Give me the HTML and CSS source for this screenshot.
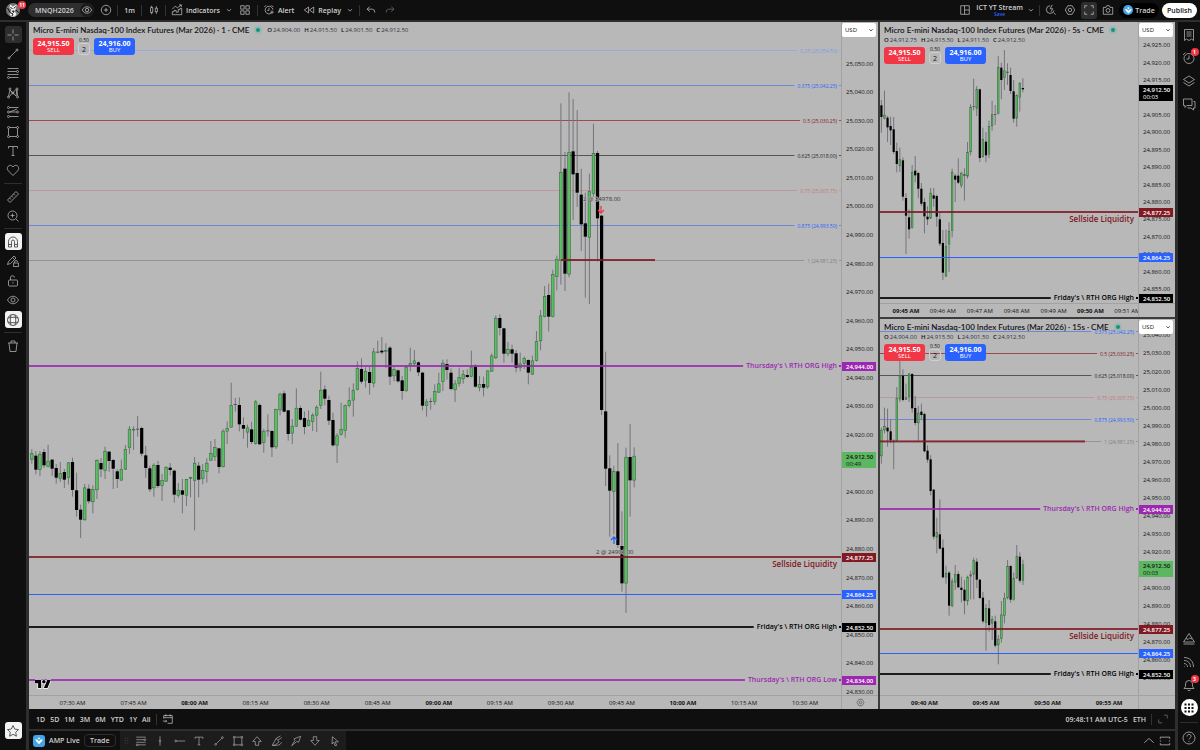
FILE: index.html
```html
<!DOCTYPE html>
<html lang="en">
<head>
  <meta charset="UTF-8" />
  <meta name="viewport" content="width=device-width, initial-scale=1" />
  <title>MNQH2026 24,912.50</title>
  <link rel="stylesheet" href="styles.css">
</head>
<body>
  <svg class="sprite" aria-hidden="true">
    <symbol id="i-cross" viewBox="0 0 28 28"><path d="M14 3v8M14 17v8M3 14h8M17 14h8M14 14h.1"/></symbol>
    <symbol id="i-line" viewBox="0 0 28 28"><path d="M7.500 20.500l13-13"/><circle cx="6" cy="22" r="2"/><circle cx="22" cy="6" r="2"/></symbol>
    <symbol id="i-fib" viewBox="0 0 28 28"><path d="M3 5h22M3 11h18M3 17h22M7 23h18"/><circle cx="23" cy="11" r="2"/><circle cx="5" cy="23" r="2"/></symbol>
    <symbol id="i-pattern" viewBox="0 0 28 28"><path d="M5 21L8 8l12 12L22 8M7 21l6-7 8-8M22 8l1 12M8 8l5 6"/><circle cx="5" cy="22" r="2"/><circle cx="8" cy="6" r="2"/><circle cx="14" cy="14" r="2"/><circle cx="22" cy="6" r="2"/><circle cx="23" cy="22" r="2"/></symbol>
    <symbol id="i-position" viewBox="0 0 28 28"><path d="M7 5h18M7 14h14M7 23h18M8 14l14-6"/><circle cx="5" cy="5" r="2"/><circle cx="5" cy="14" r="2"/><circle cx="5" cy="23" r="2"/><circle cx="23" cy="14" r="2"/></symbol>
    <symbol id="i-rect" viewBox="0 0 28 28"><path d="M7 5h14M7 23h14M5 7v14M23 7v14"/><circle cx="5" cy="5" r="2"/><circle cx="23" cy="5" r="2"/><circle cx="5" cy="23" r="2"/><circle cx="23" cy="23" r="2"/></symbol>
    <symbol id="i-text" viewBox="0 0 28 28"><path d="M5 9V5h18v4M14 5v18M11 23h6"/></symbol>
    <symbol id="i-heart" viewBox="0 0 28 28"><path d="M14 25L5 16c-7-8 4-16 9-8 5-8 16 0 9 8z"/></symbol>
    <symbol id="i-ruler" viewBox="0 0 28 28"><path d="M3 20L20 3l5 5L8 25zM7 16l3 3M11 12l3 3M15 8l3 3"/></symbol>
    <symbol id="i-zoom" viewBox="0 0 28 28"><circle cx="13" cy="13" r="9"/><path d="M20 20l5 5M13 9v8M9 13h8"/></symbol>
    <symbol id="i-magnet" viewBox="0 0 28 28"><path d="M5 24V13a9 9 0 0 1 18 0v11h-6V13a3 3 0 0 0-6 0v11zM5 19h6M17 19h6"/></symbol>
    <symbol id="i-pencil-lock" viewBox="0 0 28 28"><path d="M3 21l2-6L16 4l4 4L9 19zM15 18h10v7H15zM17 18v-2a3 3 0 0 1 6 0M13 7l4 4"/></symbol>
    <symbol id="i-lock" viewBox="0 0 28 28"><rect x="5" y="12" width="18" height="12" rx="2"/><path d="M9 12V8a4 4 0 0 1 8-1M14 16v3"/></symbol>
    <symbol id="i-eye" viewBox="0 0 28 28"><path d="M3 14c5-10 17-10 22 0-5 10-17 10-22 0z"/><circle cx="14" cy="14" r="4"/></symbol>
    <symbol id="i-globe" viewBox="0 0 28 28"><circle cx="14" cy="14" r="11"/><path d="M10 4c-2 6-2 14 0 20M18 4c2 6 2 14 0 20M4 10c6-2 14-2 20 0M4 18c6 2 14 2 20 0"/></symbol>
    <symbol id="i-trash" viewBox="0 0 28 28"><path d="M4 8h20M10 8V4h8v4M6 8l2 17h12l2-17"/></symbol>
    <symbol id="i-star" viewBox="0 0 28 28"><path d="M14 3l3.400 7.200 7.600 1-5.600 5.400 1.400 7.800L14 20.600 7.200 24.400l1.400-7.800L3 11.200l7.600-1z"/></symbol>
    <symbol id="i-plus" viewBox="0 0 28 28"><circle cx="14" cy="14" r="11"/><path d="M14 9v10M9 14h10"/></symbol>
    <symbol id="i-bars" viewBox="0 0 28 28"><path d="M6 8h5v12H6zM8.500 4v4M8.500 20v4M17 10h5v8h-5zM19.500 5v5M19.500 18v5"/></symbol>
    <symbol id="i-indicators" viewBox="0 0 28 28"><path d="M3 12l7-7 5 4 9-7M19 2h5v5M3 25v-7h4v-3h5v4h5v-6h4v-3h4v15z"/></symbol>
    <symbol id="i-grid" viewBox="0 0 28 28"><path d="M4 4h8v8H4zM16 4h8v8h-8zM4 16h8v8H4zM16 16h8v8h-8z"/></symbol>
    <symbol id="i-alert" viewBox="0 0 28 28"><path d="M20 21a9 9 0 1 1 3-8M14 9v6h-4M3 7l4-4M20 3l4 4M21 15v8M17 19h8"/></symbol>
    <symbol id="i-replay" viewBox="0 0 28 28"><path d="M13 7v14l-10-7zM25 7v14l-10-7z"/></symbol>
    <symbol id="i-undo" viewBox="0 0 28 28"><path d="M11 6l-6 6 6 6M5 12h12q6 0 6 8"/></symbol>
    <symbol id="i-redo" viewBox="0 0 28 28"><path d="M17 6l6 6-6 6M23 12H11q-6 0-6 8"/></symbol>
    <symbol id="i-down" viewBox="0 0 28 28"><path d="M7 11l7 7 7-7"/></symbol>
    <symbol id="i-up" viewBox="0 0 28 28"><path d="M3 18l11-10 11 10"/></symbol>
    <symbol id="i-layout" viewBox="0 0 28 28"><path d="M4 4h20v20H4zM13 4v20M13 14h11"/></symbol>
    <symbol id="i-flash" viewBox="0 0 28 28"><path d="M20 20l5 5M12 4a9 9 0 1 0 9 11M17 2l-5 9h6l-4 7"/></symbol>
    <symbol id="i-hex" viewBox="0 0 28 28"><path d="M9 4h10l6 10-6 10H9L3 14z"/><circle cx="14" cy="14" r="4"/></symbol>
    <symbol id="i-full" viewBox="0 0 28 28"><path d="M4 10V4h6M18 4h6v6M24 18v6h-6M10 24H4v-6"/></symbol>
    <symbol id="i-camera" viewBox="0 0 28 28"><path d="M3 8h6l2-4h6l2 4h6v16H3z"/><circle cx="14" cy="15" r="4.500"/></symbol>
    <symbol id="i-list" viewBox="0 0 28 28"><path d="M5 3h18v22l-4-3-5 3-5-3-4 3zM9 8h10M9 12h10M9 16h10"/></symbol>
    <symbol id="i-clock" viewBox="0 0 28 28"><circle cx="14" cy="15" r="10"/><path d="M14 9v7H9M2 8l5-5"/></symbol>
    <symbol id="i-layers" viewBox="0 0 28 28"><path d="M3 11l11-7 11 7-11 7zM3 17l11 7 11-7"/></symbol>
    <symbol id="i-chat" viewBox="0 0 28 28"><path d="M3 4h17v13H10l-4 4v-4H3zM23 9h3v13h-3v4l-5-4h-7"/></symbol>
    <symbol id="i-peak" viewBox="0 0 28 28"><path d="M14 3l11 17H3zM8 13l4 2 3-3 5 2M3 24h22"/></symbol>
    <symbol id="i-feed" viewBox="0 0 28 28"><path d="M4 5c12 0 19 8 19 19M4 11c8 0 13 5 13 13M4 17c4 0 7 3 7 7M4 23h1"/></symbol>
    <symbol id="i-bell" viewBox="0 0 28 28"><path d="M4 21l3-4v-5a7 7 0 0 1 14 0v5l3 4zM11 24q3 3 6 0"/></symbol>
    <symbol id="i-help" viewBox="0 0 28 28"><circle cx="14" cy="14" r="12"/><path d="M10 11c0-6 9-5 8 0 0 3-4 3-4 6M14 20v2"/></symbol>
    <symbol id="i-calendar" viewBox="0 0 28 28"><path d="M4 13V6h20v18H13M4 11h20M9 3v5M19 3v5M2 19h9M8 16l3 3-3 3"/></symbol>
    <symbol id="i-corner" viewBox="0 0 28 28"><path d="M16 5h8v8M4 15v8h8"/></symbol>
    <symbol id="i-panel" viewBox="0 0 28 28"><path d="M3 9V5h22v4M3 19v4h22v-4M2 14h3M23 14h3"/></symbol>
    <symbol id="i-vline" viewBox="0 0 28 28"><path d="M14 3v9M14 16v9"/><circle cx="14" cy="14" r="2"/></symbol>
    <symbol id="i-hray" viewBox="0 0 28 28"><path d="M6 14h20"/><circle cx="4" cy="14" r="2"/></symbol>
    <symbol id="i-arrow-up" viewBox="0 0 28 28"><path d="M14 4l10 11h-6v9h-8v-9H4z"/></symbol>
    <symbol id="i-arrow-down" viewBox="0 0 28 28"><path d="M14 24l10-11h-6V4h-8v9H4z"/></symbol>
    <symbol id="i-brush" viewBox="0 0 28 28"><path d="M3 24L12 8l7 8-10 8zM12 8l10-6M16 12l9-6M3 24h12q6 0 10-7"/></symbol>
    <symbol id="i-arrow-mark" viewBox="0 0 28 28"><path d="M25 3l-5 14-4-2L4 25l8-13-3-3z"/></symbol>
    <symbol id="i-cursor" viewBox="0 0 28 28"><path d="M8 4l14 12h-8l4 8-4 1-3-8-4 4z"/></symbol>
    <symbol id="i-drop" viewBox="0 0 28 28"><path class="solid" d="M3 9l6 1 5 5 5-5 6-1-4 7-7 7-7-7z"/><path class="solid" d="M10 6l4 4 4-4-4-2z"/></symbol>
    <symbol id="i-logo" viewBox="0 0 36 28"><path d="M14 22H7V11H0V4h14v18zM28 22h-8l7.500-18h8L28 22z"/><circle cx="20" cy="8" r="4"/></symbol>
  </svg>

  <div class="app">
    <header class="topbar">
      <button class="avatar" aria-label="Account">
        <svg class="avatar-pic" viewBox="0 0 28 28"><circle cx="14" cy="14" r="14" fill="#777"/><path d="M8 3l6 4 7-4-1 8-3 5 4 6-3 5h-8l-3-6 4-7-4-4z" fill="#eee"/><path d="M9 9l4 2M19 7l-3 4M13 16h3l-1 3zM8 19l6 3-2 4M20 14l5 5M3 10l5 9" stroke="#111" stroke-width="2" fill="none"/></svg>
        <span class="badge">11</span>
      </button>
      <button class="symbol">MNQH2026 <span class="symbol-eye"><svg class="icon"><use href="#i-eye"/></svg></span></button>
      <button class="tb" aria-label="Compare"><svg class="icon"><use href="#i-plus"/></svg></button>
      <i class="sep"></i>
      <button class="tb">1m</button>
      <i class="sep"></i>
      <button class="tb" aria-label="Bar style"><svg class="icon"><use href="#i-bars"/></svg></button>
      <i class="sep"></i>
      <button class="tb"><svg class="icon"><use href="#i-indicators"/></svg>Indicators</button>
      <button class="tb chev" aria-label="Favorite indicators"><svg class="icon"><use href="#i-down"/></svg></button>
      <button class="tb" aria-label="Templates"><svg class="icon"><use href="#i-grid"/></svg></button>
      <i class="sep"></i>
      <button class="tb roomy"><svg class="icon"><use href="#i-alert"/></svg>Alert</button>
      <button class="tb"><svg class="icon"><use href="#i-replay"/></svg>Replay</button>
      <button class="tb chev" aria-label="Replay menu"><svg class="icon"><use href="#i-down"/></svg></button>
      <i class="sep"></i>
      <button class="tb" aria-label="Undo"><svg class="icon"><use href="#i-undo"/></svg></button>
      <button class="tb dim" aria-label="Redo"><svg class="icon"><use href="#i-redo"/></svg></button>
      <div class="topbar-right">
        <button class="tb" aria-label="Layout setup"><svg class="icon"><use href="#i-layout"/></svg></button>
        <button class="layout-name">ICT YT Stream<span>Save</span></button>
        <button class="tb chev" aria-label="Manage layouts"><svg class="icon"><use href="#i-down"/></svg></button>
        <i class="sep"></i>
        <button class="tb" aria-label="Quick search"><svg class="icon"><use href="#i-flash"/></svg></button>
        <button class="tb" aria-label="Settings"><svg class="icon"><use href="#i-hex"/></svg></button>
        <button class="tb on" aria-label="Fullscreen"><svg class="icon"><use href="#i-full"/></svg></button>
        <button class="tb" aria-label="Snapshot"><svg class="icon"><use href="#i-camera"/></svg></button>
        <button class="trade-pill"><span class="broker round"><svg class="icon"><use href="#i-drop"/></svg></span>Trade</button>
        <button class="publish">Publish</button>
      </div>
    </header>

    <nav class="rail">
      <div class="tool-group tools-draw">
        <button class="tool on" aria-label="Cross"><svg class="icon"><use href="#i-cross"/></svg></button>
        <button class="tool" aria-label="Trend line"><svg class="icon"><use href="#i-line"/></svg></button>
        <button class="tool" aria-label="Fib retracement"><svg class="icon"><use href="#i-fib"/></svg></button>
        <button class="tool" aria-label="Patterns"><svg class="icon"><use href="#i-pattern"/></svg></button>
        <button class="tool" aria-label="Long position"><svg class="icon"><use href="#i-position"/></svg></button>
        <button class="tool" aria-label="Rectangle"><svg class="icon"><use href="#i-rect"/></svg></button>
        <button class="tool" aria-label="Text"><svg class="icon"><use href="#i-text"/></svg></button>
        <button class="tool" aria-label="Icons"><svg class="icon"><use href="#i-heart"/></svg></button>
      </div>
      <i class="rule"></i>
      <div class="tool-group tools-measure">
        <button class="tool" aria-label="Measure"><svg class="icon"><use href="#i-ruler"/></svg></button>
        <button class="tool" aria-label="Zoom in"><svg class="icon"><use href="#i-zoom"/></svg></button>
      </div>
      <i class="rule"></i>
      <div class="tool-group tools-mode">
        <button class="tool picked" aria-label="Magnet"><svg class="icon"><use href="#i-magnet"/></svg></button>
        <button class="tool" aria-label="Keep drawing"><svg class="icon"><use href="#i-pencil-lock"/></svg></button>
        <button class="tool" aria-label="Lock drawings"><svg class="icon"><use href="#i-lock"/></svg></button>
        <button class="tool" aria-label="Hide drawings"><svg class="icon"><use href="#i-eye"/></svg></button>
        <button class="tool picked" aria-label="Sync drawings"><svg class="icon"><use href="#i-globe"/></svg></button>
      </div>
      <i class="rule"></i>
      <button class="tool" aria-label="Remove"><svg class="icon"><use href="#i-trash"/></svg></button>
      <button class="tool picked last" aria-label="Favorites"><svg class="icon"><use href="#i-star"/></svg></button>
    </nav>

    <main class="center">
      <div class="charts">
        <section class="chart chart-main" data-chart="m1">
          <div class="plot">
            <svg class="plot-svg"></svg>
            <div class="legend">
              <div class="legend-row">
                <h2>Micro E-mini Nasdaq-100 Index Futures (Mar 2026) · 1 · CME</h2>
                <i class="live"></i>
                <p class="ohlc"><span><b>O</b>24,904.00</span> <span><b>H</b>24,915.50</span> <span><b>L</b>24,901.50</span> <span><b>C</b>24,912.50</span></p>
              </div>
              <div class="order">
                <button class="sell"><b>24,915.50</b>SELL</button>
                <div class="qty"><span>0.50</span><button>2</button></div>
                <button class="buy"><b>24,916.00</b>BUY</button>
              </div>
            </div>
            <svg class="tv-logo"><use href="#i-logo"/></svg>
          </div>
          <div class="price-axis">
            <svg class="axis-svg"></svg>
            <label class="currency"><select aria-label="Currency"><option>USD</option></select><svg class="icon"><use href="#i-down"/></svg></label>
          </div>
          <svg class="time-svg"></svg>
          <button class="axis-corner" aria-label="Scale settings"><svg class="icon"><use href="#i-hex"/></svg></button>
        </section>

        <section class="chart" data-chart="s5">
          <div class="plot">
            <svg class="plot-svg"></svg>
            <div class="legend">
              <div class="legend-row">
                <h2>Micro E-mini Nasdaq-100 Index Futures (Mar 2026) · 5s · CME</h2>
                <i class="live"></i>
              </div>
              <p class="ohlc"><span><b>O</b>24,912.75</span> <span><b>H</b>24,915.50</span> <span><b>L</b>24,911.50</span> <span><b>C</b>24,912.50</span></p>
              <div class="order">
                <button class="sell"><b>24,915.50</b>SELL</button>
                <div class="qty"><span>0.50</span><button>2</button></div>
                <button class="buy"><b>24,916.00</b>BUY</button>
              </div>
            </div>
          </div>
          <div class="price-axis">
            <svg class="axis-svg"></svg>
            <label class="currency"><select aria-label="Currency"><option>USD</option></select><svg class="icon"><use href="#i-down"/></svg></label>
          </div>
          <svg class="time-svg"></svg>
          <span class="axis-corner"></span>
        </section>

        <section class="chart" data-chart="s15">
          <div class="plot">
            <svg class="plot-svg"></svg>
            <div class="legend">
              <div class="legend-row">
                <h2>Micro E-mini Nasdaq-100 Index Futures (Mar 2026) · 15s · CME</h2>
                <i class="live"></i>
              </div>
              <p class="ohlc"><span><b>O</b>24,904.00</span> <span><b>H</b>24,915.50</span> <span><b>L</b>24,901.50</span> <span><b>C</b>24,912.50</span></p>
              <div class="order">
                <button class="sell"><b>24,915.50</b>SELL</button>
                <div class="qty"><span>0.50</span><button>2</button></div>
                <button class="buy"><b>24,916.00</b>BUY</button>
              </div>
            </div>
          </div>
          <div class="price-axis">
            <svg class="axis-svg"></svg>
            <label class="currency"><select aria-label="Currency"><option>USD</option></select><svg class="icon"><use href="#i-down"/></svg></label>
          </div>
          <svg class="time-svg"></svg>
          <span class="axis-corner"></span>
        </section>
      </div>

      <div class="rangebar">
        <button>1D</button><button>5D</button><button>1M</button><button>3M</button><button>6M</button><button>YTD</button><button>1Y</button><button>All</button>
        <i class="sep"></i>
        <button aria-label="Go to date"><svg class="icon"><use href="#i-calendar"/></svg></button>
        <button class="push">09:48:11 AM UTC-5</button>
        <button>ETH</button>
        <i class="sep"></i>
        <button class="dim" aria-label="Expand"><svg class="icon"><use href="#i-corner"/></svg></button>
      </div>

      <footer class="account">
        <span class="broker"><svg class="icon"><use href="#i-drop"/></svg></span>
        <button class="account-name">AMP Live</button>
        <button class="trade-btn">Trade</button>
        <div class="favorites">
          <svg class="grip" viewBox="0 0 6 8"><path d="M1 1h1M4 1h1M1 4h1M4 4h1M1 7h1M4 7h1" stroke="#555"/></svg>
          <button aria-label="Fib retracement"><svg class="icon"><use href="#i-fib"/></svg></button>
          <button aria-label="Vertical line"><svg class="icon"><use href="#i-vline"/></svg></button>
          <button aria-label="Horizontal ray"><svg class="icon"><use href="#i-hray"/></svg></button>
          <button aria-label="Text"><svg class="icon"><use href="#i-text"/></svg></button>
          <button aria-label="Trend line"><svg class="icon"><use href="#i-line"/></svg></button>
          <button aria-label="Rectangle"><svg class="icon"><use href="#i-rect"/></svg></button>
          <button aria-label="Arrow up"><svg class="icon"><use href="#i-arrow-up"/></svg></button>
          <button aria-label="Highlighter"><svg class="icon"><use href="#i-brush"/></svg></button>
          <button aria-label="Arrow marker"><svg class="icon"><use href="#i-arrow-mark"/></svg></button>
          <button aria-label="Arrow down"><svg class="icon"><use href="#i-arrow-down"/></svg></button>
          <button aria-label="Cursor"><svg class="icon"><use href="#i-cursor"/></svg></button>
        </div>
        <button class="push" aria-label="Open panel"><svg class="icon"><use href="#i-up"/></svg></button>
        <button aria-label="Maximize panel"><svg class="icon"><use href="#i-panel"/></svg></button>
      </footer>
    </main>

    <aside class="rail rail-right">
      <button class="tool" aria-label="Watchlist"><svg class="icon"><use href="#i-list"/></svg></button>
      <button class="tool" aria-label="Alerts"><svg class="icon"><use href="#i-clock"/></svg><span class="badge">1</span></button>
      <button class="tool" aria-label="Object tree"><svg class="icon"><use href="#i-layers"/></svg></button>
      <button class="tool" aria-label="Chats"><svg class="icon"><use href="#i-chat"/></svg></button>
      <button class="tool last" aria-label="Ideas"><svg class="icon"><use href="#i-peak"/></svg></button>
      <button class="tool" aria-label="Streams"><svg class="icon"><use href="#i-feed"/></svg></button>
      <button class="tool" aria-label="Notifications"><svg class="icon"><use href="#i-bell"/></svg><span class="badge">3</span></button>
      <button class="tool apps" aria-label="Products"><svg class="icon" viewBox="0 0 28 28"><path class="solid" d="M5 5h4v4H5zM12 5h4v4h-4zM19 5h4v4h-4zM5 12h4v4H5zM12 12h4v4h-4zM19 12h4v4h-4zM5 19h4v4H5zM12 19h4v4h-4zM19 19h4v4h-4z"/></svg></button>
      <i class="rule"></i>
      <button class="tool" aria-label="Help"><svg class="icon"><use href="#i-help"/></svg></button>
    </aside>
  </div>

  <script src="charts.js"></script>
</body>
</html>
```

FILE: styles.css
```css
* {
  box-sizing: border-box;
}
body {
  margin: 0;
  background: #2e2e2e;
  color: #d0d0d0;
  font-family: 'Open Sans', 'Noto Sans', sans-serif;
  font-size: 7px;
  line-height: 9px;
}
button, select {
  font: inherit;
  color: inherit;
  background: none;
  border: 0;
  margin: 0;
  padding: 0;
}
button {
  display: flex;
  align-items: center;
  justify-content: center;
  flex-shrink: 0;
  cursor: pointer;
  white-space: nowrap;
}
h2, p {
  margin: 0;
}
.sprite {
  display: none;
}
.icon {
  display: block;
  width: 14px;
  height: 14px;
  flex-shrink: 0;
  fill: none;
  stroke: currentColor;
  stroke-width: 1.6;
}
.solid {
  fill: currentColor;
  stroke: none;
}
.app {
  display: grid;
  grid-template-columns: 26px minmax(0, 1fr) 22px;
  grid-template-rows: 20px minmax(0, 1fr);
  gap: 2px 3px;
  height: 100vh;
}
.sep {
  width: 1px;
  height: 11px;
  background: #333;
  flex-shrink: 0;
}
.badge {
  position: absolute;
  top: -1px;
  right: -1px;
  min-width: 8px;
  height: 8px;
  border-radius: 4px;
  background: #f23645;
  color: #fff;
  font-size: 5px;
  font-weight: 700;
  line-height: 8px;
  text-align: center;
}

/* top bar */
.topbar {
  grid-column: 1 / -1;
  display: flex;
  align-items: center;
  gap: 4px;
  padding: 0 3px 0 6px;
  background: #0f0f0f;
  font-weight: 600;
}
.avatar {
  position: relative;
  width: 18px;
  justify-content: flex-start;
}
.avatar .badge {
  top: -2px;
  right: -2px;
}
.avatar-pic {
  width: 14px;
  height: 14px;
}
.symbol {
  width: 66px;
  height: 14px;
  padding-left: 7px;
  justify-content: space-between;
  border-radius: 7px;
  background: #2e2e2e;
}
.symbol-eye {
  padding: 1px;
  border-radius: 7px;
  background: #1c1c1c;
}
.symbol-eye .icon {
  width: 12px;
  height: 12px;
}
.tb {
  min-width: 15px;
  height: 17px;
  gap: 2px;
  border-radius: 3px;
}
.tb .icon {
  width: 12px;
  height: 12px;
  margin: 0 1px;
}
.tb.chev {
  min-width: 10px;
}
.tb.chev .icon {
  width: 8px;
  height: 8px;
  stroke-width: 2.4;
}
.tb.on, .tool.on {
  background: #2e2e2e;
}
.tb.roomy {
  margin-right: 4px;
}
.dim {
  color: #777;
}
.topbar-right {
  display: flex;
  align-items: center;
  gap: 3px;
  margin-left: auto;
}
.topbar-right .tb {
  min-width: 16px;
}
.topbar-right .tb.chev {
  min-width: 10px;
}
.layout-name {
  flex-direction: column;
  line-height: 8px;
}
.layout-name span {
  color: #2962ff;
  font-size: 5px;
  line-height: 5px;
}
.trade-pill {
  width: 40px;
  height: 15px;
  gap: 2px;
  border: 1px solid #000;
  border-radius: 8px;
  background: #000;
}
.broker {
  display: flex;
  align-items: center;
  justify-content: center;
  width: 12px;
  height: 12px;
  border-radius: 3px;
  background: #42a5e8;
  color: #fff;
}
.broker.round {
  width: 10px;
  height: 10px;
  border-radius: 5px;
}
.broker .icon {
  width: 9px;
  height: 9px;
}
.publish {
  width: 35px;
  height: 15px;
  border-radius: 8px;
  background: #fff;
  color: #0f0f0f;
}

/* side rails */
.rail {
  display: flex;
  flex-direction: column;
  align-items: center;
  padding: 4px 0 11px;
  background: #0f0f0f;
  color: #b0b0b0;
}
.tool-group {
  display: flex;
  flex-direction: column;
  justify-content: space-between;
}
.tools-draw {
  height: 153px;
}
.tools-measure {
  height: 36px;
}
.tools-mode {
  height: 95px;
}
.tool {
  position: relative;
  width: 17px;
  height: 17px;
  border-radius: 3px;
}
.tool.picked {
  background: #f2f2f2;
  color: #333;
}
.tool.last {
  margin-top: auto;
}
.rule {
  width: 18px;
  height: 1px;
  margin: 4px 0;
  background: #2e2e2e;
}
.rail-right {
  gap: 6px;
  padding-bottom: 4px;
}
.rail-right .rule {
  margin: 0;
}
.tool.apps {
  border-radius: 9px;
  background: #fff;
  color: #0f0f0f;
}

/* charts */
.center {
  display: flex;
  flex-direction: column;
  min-width: 0;
}
.charts {
  flex: 1;
  min-height: 0;
  display: grid;
  grid-template-columns: 849fr 295fr;
  grid-template-rows: 295fr 390fr;
  gap: 2px;
  background: #3c3c3c;
}
.chart {
  display: grid;
  grid-template-columns: minmax(0, 1fr) 37px;
  grid-template-rows: minmax(0, 1fr) 14px;
  min-width: 0;
  min-height: 0;
  background: #b8b8b8;
  color: #131313;
}
.chart-main {
  grid-row: 1 / -1;
}
.plot, .price-axis {
  position: relative;
  min-height: 0;
}
.price-axis, .axis-corner {
  border-left: 1px solid #a2a2a2;
}
.time-svg, .axis-corner {
  border-top: 1px solid #a2a2a2;
}
.axis-corner {
  color: #333;
}
.axis-corner .icon {
  width: 9px;
  height: 9px;
}
.plot-svg, .axis-svg {
  position: absolute;
  width: 100%;
  height: 100%;
}
.time-svg {
  width: 100%;
  height: 14px;
}
.tv-logo {
  position: absolute;
  left: 6px;
  bottom: 4px;
  width: 16px;
  height: 13px;
  overflow: visible;
  stroke: #fff;
  stroke-width: 3;
  paint-order: stroke;
}
.legend {
  position: absolute;
  top: 3px;
  left: 4px;
}
.legend-row {
  display: flex;
  align-items: center;
  height: 10px;
}
.legend h2 {
  font-family: Lato, 'Open Sans', sans-serif;
  font-size: 8px;
  font-weight: 600;
  line-height: 10px;
  white-space: nowrap;
}
.live {
  width: 4px;
  height: 4px;
  margin: 0 7px;
  border-radius: 50%;
  background: #089981;
  box-shadow: 0 0 0 2px #9fb5ae;
}
.ohlc {
  display: flex;
  gap: 4px;
  color: #33363f;
  font-size: 6px;
  line-height: 11px;
  white-space: nowrap;
}
.ohlc b {
  padding-right: 1px;
  font-weight: 600;
  color: #131313;
}
.order {
  display: flex;
  gap: 4px;
  margin-top: 3px;
}
.legend .ohlc + .order {
  margin-top: 1px;
}
.sell, .buy {
  flex-direction: column;
  width: 41px;
  height: 17px;
  border-radius: 3px;
  color: #fff;
  font-size: 6px;
  line-height: 7px;
}
.sell b, .buy b {
  font-size: 7px;
}
.sell {
  background: #f23645;
}
.buy {
  background: #2962ff;
}
.qty {
  width: 12px;
  font-size: 5px;
  line-height: 5px;
  text-align: center;
}
.qty button {
  width: 12px;
  height: 12px;
  border: 1px solid #d0d0d0;
  border-radius: 3px;
  font-size: 7px;
}
.currency {
  position: absolute;
  top: 1px;
  left: 0;
  width: 34px;
  height: 14px;
  border-radius: 2px;
  background: #fff;
}
.currency select {
  appearance: none;
  width: 100%;
  height: 100%;
  padding: 0 3px;
  font-size: 6px;
}
.currency .icon {
  position: absolute;
  top: 4px;
  right: 2px;
  width: 6px;
  height: 6px;
  stroke-width: 4;
}
.axis-text {
  font-size: 6px;
  fill: #131313;
}
.bold {
  font-weight: 700;
}
.tag-text {
  font-size: 6px;
  font-weight: 600;
}
.fib-text {
  font-size: 5px;
}
.level-text {
  font-size: 7px;
  font-weight: 600;
}
.zone-text {
  font-size: 8px;
  font-weight: 600;
}
.note-text {
  font-size: 6px;
  fill: #333;
  stroke: #b8b8b8;
  stroke-width: 1;
  paint-order: stroke;
}

/* bottom bars */
.rangebar, .account {
  display: flex;
  align-items: center;
  background: #0f0f0f;
}
.rangebar {
  height: 20px;
  gap: 5px;
  padding: 0 6px 0 7px;
  font-weight: 600;
}
.rangebar .icon, .account .icon {
  width: 12px;
  height: 12px;
}
.push {
  margin-left: auto;
}
.account {
  height: 19px;
  gap: 4px;
  margin-top: 2px;
  padding: 0 4px;
  font-weight: 600;
}
.account .broker .icon {
  width: 10px;
  height: 10px;
}
.trade-btn {
  width: 32px;
  height: 13px;
  border: 1px solid #2e2e2e;
  border-radius: 4px;
}
.favorites {
  display: flex;
  align-items: center;
  justify-content: space-between;
  width: 226px;
  height: 19px;
  padding: 0 4px;
  background: #1c1c1c;
  color: #b0b0b0;
}
.favorites button {
  width: 14px;
  height: 17px;
}
.grip {
  width: 5px;
  height: 7px;
}
```

FILE: charts.js
```js
const NS = "http://www.w3.org/2000/svg";

const BLUE = "#2962ff", RED = "#801922", BLACK = "#000000", PURPLE = "#9c27b0", GREEN = "#5cb860";

// fib retracement shared by the charts
const FIBS = [
  { price: 25054.5, label: "0.25", color: "#7f9be6", line: "#9aa9d8" },
  { price: 25042.25, label: "0.375", color: BLUE, line: "#7088d4" },
  { price: 25030.25, label: "0.5", color: RED, line: "#9c4b55" },
  { price: 25018, label: "0.625", color: "#222", line: "#555" },
  { price: 25005.75, label: "0.75", color: "#c27a80", line: "#c0979a" },
  { price: 24993.5, label: "0.875", color: BLUE, line: "#7088d4" },
  { price: 24981.25, label: "1", color: "#808080", line: "#949494" }
];

// bars: "u|d|x high top bottom low", thirds of a grid row, counted from `at`
const CHARTS = {
  m1: {
    width: 812, height: 673, top: 25064.64, span: 235.8,
    x0: 2.8, step: 4.07, body: 3.2,
    ticks: [24830, 25050, 10],
    times: [[10, "07:30 AM"], [25, "07:45 AM"], [40, "08:00 AM", 1], [55, "08:15 AM"], [70, "08:30 AM"], [85, "08:45 AM"], [100, "09:00 AM", 1], [115, "09:15 AM"], [130, "09:30 AM"], [145, "09:45 AM"], [160, "10:00 AM", 1], [175, "10:15 AM"], [190, "10:30 AM"]],
    fibs: FIBS,
    segment: [532, 626],
    levels: [
      { price: 24944, label: "Thursday's \\ RTH ORG High", color: PURPLE, size: 2 },
      { price: 24877.25, under: "Sellside Liquidity", color: RED, size: 2 },
      { price: 24864.25, color: BLUE, size: 1 },
      { price: 24852.5, label: "Friday's \\ RTH ORG High", color: BLACK, size: 2 },
      { price: 24834, label: "Thursday's \\ RTH ORG Low", color: PURPLE, size: 2 }
    ],
    last: { price: 24912.5, time: "00:49", color: GREEN, ink: "#111" },
    fills: [
      { x: 573, y: 176, side: "sell", label: "2 @ 24978.00", lx: 554, ly: 179 },
      { x: 585, y: 529, side: "buy", label: "2 @ 24903.00", lx: 567, ly: 532 }
    ],
    parts: [
      { at: 358, bars: "u 207 220 239 251,d 213 227 269 283,u 213 222 269 288,d 207 216 256 264,u 194 243 260 262,d 237 239 266 288,d 252 264 293 311,u 246 280 296 306,d 267 276 299 324,u 246 248 293 314,d 233 246 330 350,d 278 331 390 410,d 374 389 419 474,u 312 323 420 422,d 313 326 364 371,u 316 328 366 400,u 238 241 330 357,d 234 249 268 291,u 200 213 272 297,d 213 215 243 275,d 237 240 266 327,d 268 274 297 324,u 239 268 301 303,u 195 208 268 270,u 138 147 203 222,u 139 147 151 210,x 108 146 149 170,d 140 144 221 229,d 198 226 264 293,d 257 265 328 336,u 250 255 324 350,d 243 255 318 324,u 282 301 317 363,u 258 262 304 306,d 249 263 270 286,d 269 272 344 368,u 309 330 347 353,d 297 331 344 400,u 297 298 346 378,u 290 292 296 352,u 231 249 302 451,d 246 257 299 352,u 252 271 296 313,u 235 249 275 308,u 183 220 241 243,u 177 202 230 243,d 203 205 261 280,u 147 153 261 262,u 124 145 154 192,u 8 76 142 143,x 54 72 75 95,d 52 75 133 154,d 112 135 146 176,u 134 143 157 203,d 125 148 186 192,u 60 65 191 194,d 70 75 193 194,u 146 153 188 218,x 103 151 153 170,d 151 153 202 231,u 86 88 201 207,u 38 42 90 106,d 32 40 95 97,d 90 91 162 182,u 117 138 160 192,u 25 84 139 141,d 77 84 119 122,d 94 114 141 163,u 91 121 137 139,u 99 105 125 153,u 76 81 106 156" },
      { at: 298, bars: "u 155 210 257 267,d 196 208 236 256,d 227 240 302 315,d 278 300 376 380,u 340 347 376 429,u 248 328 344 346,u 254 256 332 353,u 202 241 257 262,u 190 210 241 290,u 124 145 209 211,d 115 147 185 191,u 142 154 181 203,d 141 156 189 224,u 84 95 190 202,x 62 95 98 100,d 51 92 97 103,u 70 91 95 144,d 78 83 170 195,u 139 148 168 184,d 149 151 184 188,d 168 181 213 239,u 135 141 213 215,u 83 130 136 154,u 90 122 132 138,d 124 127 157 168,d 156 158 257 271,u 237 245 257 290,x 233 243 246 269,u 193 214 245 255,u 158 191 217 219,u 119 129 185 213,d 118 132 150 179,d 145 158 207 211,u 180 191 210 246,u 143 172 191 200,u 150 163 177 191,d 148 165 171 174,u 92 141 170 172,d 133 139 200 203,u 168 193 203 214,d 170 192 203 229,u 151 152 201 206,u 100 107 154 156,u -14 -6 114 117" },
      { at: 58, bars: "d 703 714 744 766,d 743 745 821 848,u 786 808 821 829,d 794 808 821 848,d 810 820 863 877,u 818 851 864 874,u 829 835 851 867,d 838 840 878 913,u 827 842 883 885,u 753 784 842 845,u 690 707 783 811,u 618 649 710 712,d 611 645 710 755,u 569 583 710 712,u 527 537 590 631,u 70 277 541 614,d 216 266 581 633,u 37 217 583 592,d 57 214 283 420,d 90 279 338 381,d 266 344 433 513,d 338 430 470 653,u 281 334 473 672,u 131 220 341 350,d 213 219 415 544,d 405 407 990 1005" },
      { at: 378, bars: "d -145 34 206 258,d 166 205 272 410,u 197 214 275 403,d 129 214 435 444,d 334 438 550 575,u 143 171 550 639,d 72 171 241 350,u 142 168 241 262" }
    ]
  },
  s5: {
    width: 258, height: 281, top: 24931.7, span: 80.7,
    x0: 1.4, step: 3.075, body: 2.2,
    ticks: [24855, 24925, 5],
    times: [[8, "09:45 AM", 1], [20, "09:46 AM"], [32, "09:47 AM"], [44, "09:48 AM"], [56, "09:49 AM"], [68, "09:50 AM", 1], [80, "09:51 AM"]],
    fibs: [],
    levels: [
      { price: 24877.25, under: "Sellside Liquidity", color: RED, size: 2 },
      { price: 24864.25, color: BLUE, size: 1 },
      { price: 24852.5, label: "Friday's \\ RTH ORG High", color: BLACK, size: 2 }
    ],
    last: { price: 24912.5, time: "00:03", color: BLACK, ink: "#fff" },
    fills: [],
    parts: [
      { at: 58, bars: "d 60 76 111 158,u 32 105 115 118,d 108 113 142 186,d 110 138 151 195,d 111 148 216 222,d 188 213 252 277,u 203 238 258 276,d 232 241 350 362,d 340 354 407 522,d 388 412 448 476,u 255 276 443 446,d 228 272 286 307,d 276 279 326 355,d 309 326 371 378,d 355 366 409 460,d 379 410 418 435,u 324 339 415 417,d 324 346 356 380,d 344 348 410 440,d 398 418 491 498,d 450 489 578 600,u 449 499 589 590,u 427 453 493 576,u 266 276 452 472,d 281 287 299 366,d 235 287 308 312,u 275 280 316 324,x 265 282 288 362,u 186 216 289 296,u 73 81 216 226,x -4 78 81 91,u 18 28 85 108,d 26 28 234 246,u 143 178 231 233,d 156 185 226 247,u 122 139 223 234,u 62 103 138 152,x 75 102 105 135,u -72 -39 101 103,d -52 -37 0 58,u -90 -28 -7 30,x -50 -25 -21 15,d -37 -15 33 42,d 0 34 116 128,u 43 46 115 140,u 6 10 53 95,d -5 24 28 37" }
    ]
  },
  s15: {
    width: 258, height: 376, top: 25049.1, span: 208.4,
    x0: 1.4, step: 3.077, body: 2.2,
    ticks: [24850, 25040, 10],
    times: [[14, "09:40 AM", 1], [34, "09:45 AM", 1], [54, "09:50 AM", 1], [74, "09:55 AM", 1]],
    fibs: FIBS.slice(1),
    segment: [0, 205],
    levels: [
      { price: 24944, label: "Thursday's \\ RTH ORG High", color: PURPLE, size: 2 },
      { price: 24877.25, under: "Sellside Liquidity", color: RED, size: 2 },
      { price: 24864.25, color: BLUE, size: 1 },
      { price: 24852.5, label: "Friday's \\ RTH ORG High", color: BLACK, size: 2 }
    ],
    last: { price: 24912.5, time: "00:03", color: GREEN, ink: "#111" },
    fills: [],
    parts: [
      { at: -3, bars: "u 335 342 420 443,u 275 331 342 352,d 278 335 346 392,d 311 346 373 382,x 370 374 378 460,u 213 247 374 376,u 125 179 250 258,d 160 179 252 256,u 203 245 251 252,u 171 173 242 258,d 171 174 277 290,d 240 276 321 328,u 270 291 321 378,d 263 287 297 311,d 290 294 406 409,d 388 404 431 440,d 418 430 525 538,d 519 521 662 670" },
      { at: 181, bars: "u 53 97 112 160,d -2 103 146 148,d 118 143 232 235,u 197 219 232 251,d 213 218 317 347,u 235 243 318 322,u 195 223 247 270,d 214 222 262 264,d 230 263 270 307,d 240 269 302 343,u 227 231 303 316,x 212 223 229 298,u 173 181 223 298,d 175 185 239 264,d 237 239 294 297,d 276 293 364 370,u 312 325 368 452,d 300 325 375 395,u 348 358 370 420,d 347 364 437 442,u 405 417 435 493,u 303 344 416 428,u 278 294 347 370,u 180 198 294 298,d 196 198 299 308,u 218 235 299 302,u 135 169 234 237,d 157 170 242 249,u 179 194 242 255" }
    ]
  }
};

function add(parent, tag, attrs, text) {
  const el = document.createElementNS(NS, tag);
  for (const key in attrs) el.setAttribute(key, attrs[key]);
  if (text !== undefined) el.textContent = text;
  parent.appendChild(el);
  return el;
}

function money(value) {
  return value.toLocaleString("en-US", { minimumFractionDigits: 2, maximumFractionDigits: 2 });
}

function drawCandles(svg, c, sx, sy) {
  let i = 0;
  c.parts.forEach(part => {
    part.bars.split(",").forEach(bar => {
      const [kind, ...v] = bar.split(" ");
      const [high, top, bottom, low] = v.map(n => (part.at + n / 3) * sy);
      const x = (c.x0 + c.step * i) * sx;
      const w = c.body * sx;
      add(svg, "line", { x1: x, x2: x, y1: high, y2: low, stroke: "#74747c" });
      if (kind === "u") {
        add(svg, "rect", { x: x - w / 2 + 0.3, y: top + 0.2, width: w - 0.6, height: Math.max(bottom - top - 0.4, 0.6), fill: "#58c060", stroke: "#3c6a42", "stroke-width": 0.6 });
      } else {
        add(svg, "rect", { x: x - w / 2, y: top, width: w, height: Math.max(bottom - top, 1), fill: kind === "d" ? "#000" : "#555" });
      }
      i++;
    });
  });
}

// a line that stops before its label, then a short tick at the axis
function drawLevel(svg, W, y, label, cls, color, line, size) {
  let end = W;
  if (label) {
    const text = add(svg, "text", { x: W - 4, y: y + 2, "text-anchor": "end", class: cls, fill: color }, label);
    end = W - 4 - text.getComputedTextLength() - 3;
    add(svg, "rect", { x: W - 2, y: y - size / 2, width: 2, height: size, fill: line });
  }
  add(svg, "rect", { x: 0, y: y - size / 2, width: end, height: size, fill: line, opacity: size > 1 ? 0.85 : 1 });
}

function drawAxis(svg, c, y) {
  for (let p = c.ticks[0]; p <= c.ticks[1]; p += c.ticks[2]) {
    // the last price tag stands in for the tick it covers
    const gap = y(p) - y(c.last.price);
    if (gap > -4 && gap < 12) continue;
    add(svg, "text", { x: 4, y: y(p) + 2, class: "axis-text" }, money(p));
  }
  c.levels.forEach(l => {
    add(svg, "rect", { x: 0, y: Math.round(y(l.price)) - 4, width: 34, height: 9, fill: l.color });
    add(svg, "text", { x: 4, y: Math.round(y(l.price)) + 3, class: "tag-text", fill: "#fff" }, money(l.price));
  });
  const top = Math.round(y(c.last.price)) - 4;
  add(svg, "rect", { x: 0, y: top, width: 34, height: 16, fill: c.last.color });
  add(svg, "text", { x: 4, y: top + 7, class: "tag-text", fill: c.last.ink }, money(c.last.price));
  add(svg, "text", { x: 4, y: top + 14, class: "axis-text", style: "fill:" + c.last.ink }, c.last.time);
}

function drawChart(section) {
  const c = CHARTS[section.dataset.chart];
  const plot = section.querySelector(".plot-svg");
  const axis = section.querySelector(".axis-svg");
  const time = section.querySelector(".time-svg");
  [plot, axis, time].forEach(el => el.replaceChildren());

  const W = plot.clientWidth, H = plot.clientHeight;
  const sx = W / c.width, sy = H / c.height;
  const y = price => (c.top - price) / c.span * H;

  c.fibs.forEach(f => {
    const text = f.label + " (" + money(f.price) + ")";
    drawLevel(plot, W, Math.floor(y(f.price)) + 0.5, text, "fib-text", f.color, f.line, 1);
  });
  drawCandles(plot, c, sx, sy);
  c.levels.forEach(l => {
    const ly = Math.round(y(l.price)) + (l.size === 1 ? 0.5 : 0);
    drawLevel(plot, W, ly, l.label, "level-text", l.color, l.color, l.size);
    if (l.under) {
      add(plot, "text", { x: W - 4, y: ly + 10, "text-anchor": "end", class: "zone-text", fill: l.color }, l.under);
    }
  });
  if (c.segment) {
    add(plot, "rect", { x: c.segment[0] * sx, y: y(24981.25) - 1, width: (c.segment[1] - c.segment[0]) * sx, height: 2, fill: RED, opacity: 0.85 });
  }
  c.fills.forEach(f => {
    const ax = (f.side === "sell" ? f.x - 1 : f.x) * sx;
    const ay = (f.side === "sell" ? f.y + 8 : f.y - 14) * sy;
    const d = f.side === "sell" ? "M0 0v7M-3 4l3 3 3-3" : "M0 7V0M-3 3l3-3 3 3";
    add(plot, "path", { d: d, transform: "translate(" + ax + " " + ay + ")", fill: "none", stroke: f.side === "sell" ? "#f23645" : BLUE, "stroke-width": 1.3 });
    add(plot, "text", { x: f.lx * sx, y: f.ly * sy, class: "note-text" }, f.label);
  });

  drawAxis(axis, c, y);
  c.times.forEach(([i, label, strong]) => {
    add(time, "text", { x: (c.x0 + c.step * i) * sx, y: 9, "text-anchor": "middle", class: strong ? "axis-text bold" : "axis-text" }, label);
  });
}

function drawAll() {
  document.querySelectorAll(".chart").forEach(drawChart);
}

drawAll();
window.addEventListener("resize", drawAll);
```
